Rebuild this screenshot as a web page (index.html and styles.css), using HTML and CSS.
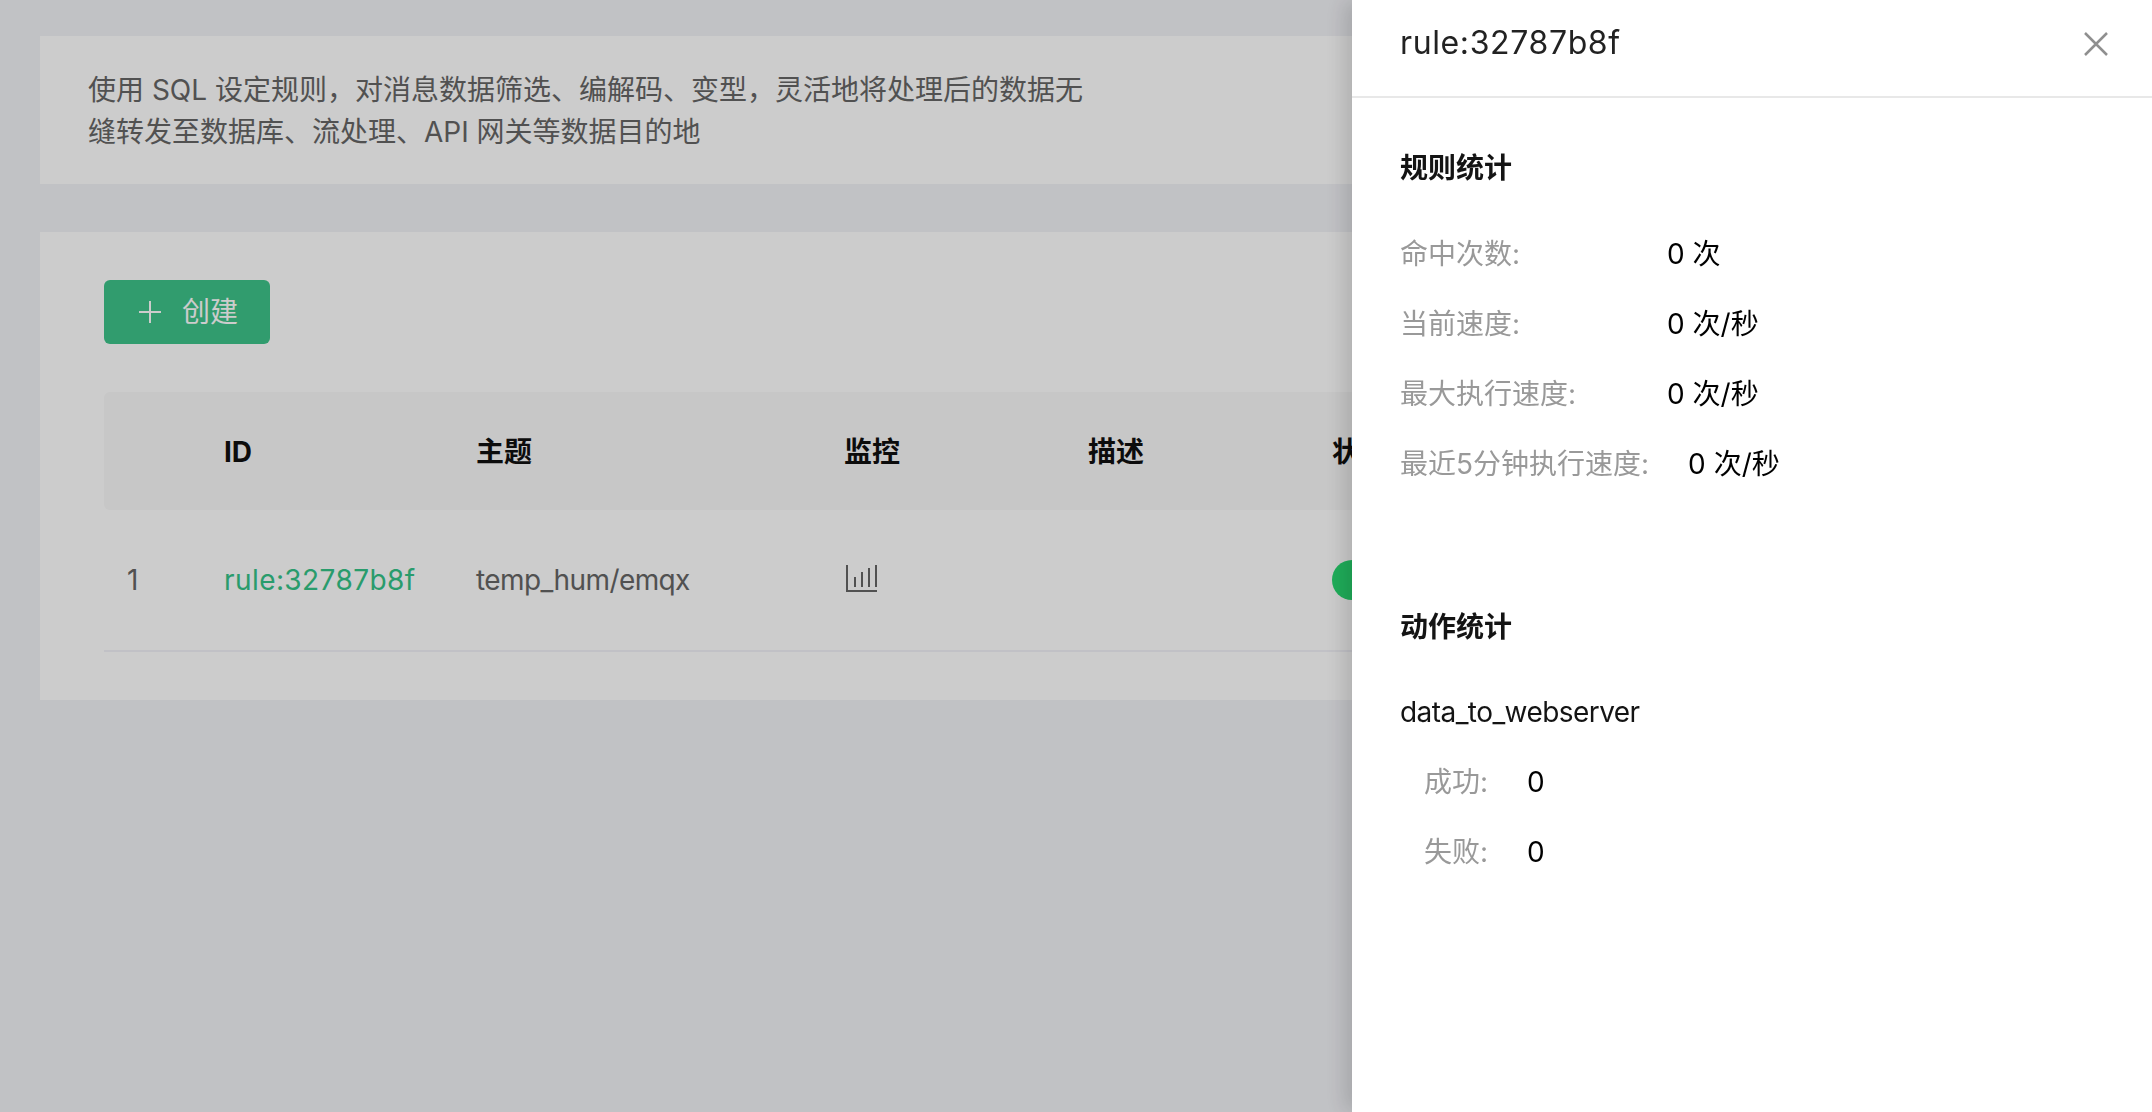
FILE: index.html
```html
<!DOCTYPE html>
<html lang="zh-CN">
<head>
    <meta charset="UTF-8">
    <title>规则引擎</title>
    <link rel="stylesheet" href="styles.css">
</head>
<body>

    <div class="page">
        <div class="desc-card">
            <p class="desc-text">使用 SQL 设定规则，对消息数据筛选、编解码、变型，灵活地将处理后的数据无缝转发至数据库、流处理、API 网关等数据目的地</p>
        </div>

        <div class="list-card">
            <button class="create-btn" type="button">
                <svg class="plus-icon" width="24" height="24" viewBox="0 0 24 24"><path d="M12 1v22M1 12h22"></path></svg>
                <span>创建</span>
            </button>

            <div class="rule-table">
                <div class="rule-row rule-head">
                    <div></div>
                    <div>ID</div>
                    <div>主题</div>
                    <div>监控</div>
                    <div>描述</div>
                    <div>状态</div>
                </div>
                <div class="rule-row rule-body">
                    <div class="cell-index">1</div>
                    <div class="cell-link">rule:32787b8f</div>
                    <div class="cell-topic">temp_hum/emqx</div>
                    <div>
                        <svg class="chart-icon" width="32" height="28" viewBox="0 0 32 28">
                            <path d="M2 1v26M1 27h31M10 13v10M17 8v15M24 4v19M31 1v22"></path>
                        </svg>
                    </div>
                    <div></div>
                    <div><span class="switch"></span></div>
                </div>
            </div>
        </div>
    </div>

    <div class="mask"></div>

    <div class="drawer">
        <div class="drawer-head">
            <span class="drawer-title">rule:32787b8f</span>
            <svg class="close-icon" width="24" height="24" viewBox="0 0 24 24"><path d="M1 1l22 22M23 1L1 23"></path></svg>
        </div>
        <div class="drawer-body">
            <h3 class="section-title">规则统计</h3>
            <div class="stat-row"><span class="stat-label">命中次数:</span><span>0 次</span></div>
            <div class="stat-row"><span class="stat-label">当前速度:</span><span>0 次/秒</span></div>
            <div class="stat-row"><span class="stat-label">最大执行速度:</span><span>0 次/秒</span></div>
            <div class="stat-row"><span class="stat-label">最近5分钟执行速度:</span><span>0 次/秒</span></div>

            <h3 class="section-title action-title">动作统计</h3>
            <div class="action-name">data_to_webserver</div>
            <div class="stat-row action-row"><span class="action-label">成功:</span><span>0</span></div>
            <div class="stat-row action-row"><span class="action-label">失败:</span><span>0</span></div>
        </div>
    </div>

</body>
</html>
```

FILE: styles.css
```css
html, body {
    margin: 0;
    height: 100%;
    overflow: hidden;
}
body {
    background-color: #f2f3f7;
    color: #666;
    font-family: Inter, "Noto Sans CJK SC", sans-serif;
    font-size: 28px;
    line-height: 42px;
}
.page {
    padding: 36px 40px;
}
.desc-card {
    background-color: #fff;
    padding: 33px 48px 31px;
    margin-bottom: 48px;
}
.desc-text {
    margin: 0;
    max-width: 1000px;
}
.list-card {
    background-color: #fff;
    padding: 48px 64px;
}
.create-btn {
    display: flex;
    align-items: center;
    gap: 20px;
    width: 166px;
    height: 64px;
    padding: 0 34px;
    border: 0;
    border-radius: 6px;
    background-color: #3ec48a;
    color: #fff;
    font: inherit;
    white-space: nowrap;
    margin-bottom: 48px;
}
.plus-icon {
    flex: none;
}
.plus-icon path {
    fill: none;
    stroke: #fff;
    stroke-width: 2;
}
.rule-row {
    display: grid;
    grid-template-columns: 120px 252px 368px 244px 244px 1fr;
    align-items: center;
}
.rule-head {
    height: 118px;
    padding-top: 2px;
    box-sizing: border-box;
    background-color: #f9f9f9;
    border-radius: 6px;
    color: #0f0f0f;
    font-weight: 700;
}
.rule-body {
    height: 140px;
    border-bottom: 2px solid #f2f2f8;
}
.cell-index {
    padding-left: 23px;
}
.cell-link {
    color: #34c388;
    letter-spacing: 0.42px;
}
.cell-topic {
    letter-spacing: -0.6px;
}
.chart-icon {
    display: block;
    margin: -5px 0 0 1px;
}
.chart-icon path {
    fill: none;
    stroke: #666;
    stroke-width: 2;
}
.switch {
    display: block;
    width: 88px;
    height: 40px;
    border-radius: 20px;
    background-color: #27d870;
}
.mask {
    position: fixed;
    top: 0;
    left: 0;
    right: 0;
    bottom: 0;
    background-color: rgba(0, 0, 0, 0.2);
}
.drawer {
    position: fixed;
    top: 0;
    right: 0;
    bottom: 0;
    width: 800px;
    background-color: #fff;
    color: #000;
    box-shadow: -8px 0 20px rgba(0, 0, 0, 0.15);
}
.drawer-head {
    display: flex;
    align-items: center;
    justify-content: space-between;
    height: 86px;
    padding: 0 44px 10px 48px;
    border-bottom: 2px solid #e8e8e8;
}
.drawer-title {
    font-size: 32px;
    color: #222;
    letter-spacing: 0.62px;
}
.close-icon {
    margin-top: 2px;
}
.close-icon path {
    fill: none;
    stroke: #8f8f8f;
    stroke-width: 2.5;
}
.drawer-body {
    padding: 49px 48px;
}
.section-title {
    margin: 0 0 44px;
    font-size: 28px;
    font-weight: 700;
    color: #141414;
}
.action-title {
    margin-top: 121px;
    margin-bottom: 43px;
}
.stat-row {
    margin-top: 28px;
}
.stat-label {
    display: inline-block;
    min-width: 228px;
    margin-right: 39px;
    color: #999;
}
.action-name {
    color: #141414;
    letter-spacing: -0.56px;
}
.action-row {
    padding-left: 24px;
}
.action-label {
    display: inline-block;
    width: 64px;
    margin-right: 39px;
    white-space: nowrap;
    color: #999;
}
```
